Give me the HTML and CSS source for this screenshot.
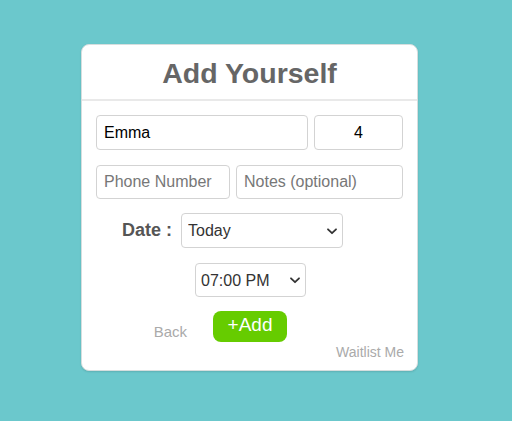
FILE: index.html
```html
<!DOCTYPE html>
<html lang="en">
<head>
<meta charset="utf-8">
<title>Add Yourself</title>
<link rel="stylesheet" href="styles.css">
</head>
<body>
<div class="card">
  <div class="card-header">Add Yourself</div>
  <div class="card-body">
    <div class="row row-top">
      <input class="field field-name" type="text" value="Emma">
      <input class="field field-party" type="text" value="4">
    </div>
    <div class="row row-second">
      <input class="field field-phone" type="text" placeholder="Phone Number">
      <input class="field field-notes" type="text" placeholder="Notes (optional)">
    </div>
    <div class="date-row">
      <span class="date-label">Date :</span>
      <span class="select-wrap select-date">
        <select class="select"><option>Today</option></select>
        <svg class="chev" width="10" height="7" viewBox="0 0 10 7"><path d="M1 1.3 L5 5.2 L9 1.3" fill="none" stroke="#333" stroke-width="1.8" stroke-linecap="round" stroke-linejoin="round"/></svg>
      </span>
    </div>
    <div class="time-row">
      <span class="select-wrap select-time">
        <select class="select"><option>07:00 PM</option></select>
        <svg class="chev" width="10" height="7" viewBox="0 0 10 7"><path d="M1 1.3 L5 5.2 L9 1.3" fill="none" stroke="#333" stroke-width="1.8" stroke-linecap="round" stroke-linejoin="round"/></svg>
      </span>
    </div>
    <div class="action-row">
      <a class="back-link">Back</a>
      <button class="add-btn" type="button">+Add</button>
      <span></span>
    </div>
    <div class="footer-row"><span class="waitlist">Waitlist Me</span></div>
  </div>
</div>
</body>
</html>
```
FILE: styles.css
```css
* { box-sizing: border-box; }
html, body { margin: 0; padding: 0; }
body {
  background: #6bc8cc;
  font-family: "Liberation Sans", Arial, sans-serif;
  width: 512px;
  height: 421px;
  overflow: hidden;
}
.card {
  margin: 44px 0 0 81px;
  width: 337px;
  height: 327px;
  background: #fff;
  border: 1px solid #d6dede;
  border-radius: 8px;
  box-shadow: 0 1px 2px rgba(0,0,0,0.12);
}
.card-header {
  height: 56px;
  padding-top: 2px;
  line-height: 53px;
  text-align: center;
  font-size: 28.5px;
  font-weight: bold;
  color: #666;
  border-bottom: 2px solid #e9e9e9;
}
.card-body {
  padding: 14px 13px 0 14px;
}
.row {
  display: flex;
  gap: 6px;
}
.row-second { margin-top: 15px; }
.field {
  height: 35px;
  border: 1px solid #d3d3d3;
  border-radius: 4px;
  font-family: "Liberation Sans", Arial, sans-serif;
  font-size: 16px;
  color: #000;
  padding: 0 7px;
  outline: none;
  background: #fff;
}
.field::placeholder { color: #777; }
.field-name { width: 212px; }
.field-party { width: 89px; text-align: center; }
.field-phone { width: 134px; height: 34px; }
.field-notes { width: 167px; height: 34px; }
.date-row {
  display: flex;
  align-items: center;
  gap: 9px;
  margin-top: 14px;
  padding-left: 26px;
}
.date-label {
  font-size: 18px;
  font-weight: bold;
  color: #555;
}
.select-wrap {
  position: relative;
  display: inline-block;
}
.select {
  appearance: none;
  -webkit-appearance: none;
  height: 35px;
  border: 1px solid #d3d3d3;
  border-radius: 4px;
  background: #fff;
  font-family: "Liberation Sans", Arial, sans-serif;
  font-size: 16px;
  color: #333;
  outline: none;
  display: block;
}
.select-date .select { width: 162px; padding: 0 6px; }
.select-time .select { width: 111px; height: 34px; padding: 0 5px; }
.chev {
  position: absolute;
  right: 6px;
  top: 50%;
  margin-top: -3px;
}
.time-row {
  display: flex;
  justify-content: center;
  margin-top: 15px;
  padding-left: 1px;
}
.action-row {
  display: grid;
  grid-template-columns: 1fr auto 1fr;
  margin-top: 14px;
}
.back-link {
  justify-self: end;
  align-self: end;
  margin-right: 26px;
  margin-bottom: 2px;
  font-size: 15px;
  line-height: 17px;
  color: #aaa;
}
.add-btn {
  width: 74px;
  height: 31px;
  border: none;
  border-radius: 8px;
  background: #66cc00;
  color: #fff;
  font-family: "Liberation Sans", Arial, sans-serif;
  font-size: 19px;
  padding: 0;
  line-height: 28px;
  padding-bottom: 3px;
}
.footer-row {
  display: flex;
  justify-content: flex-end;
  margin-top: 2px;
}
.waitlist {
  font-size: 14px;
  line-height: 16px;
  color: #aaa;
}
```
